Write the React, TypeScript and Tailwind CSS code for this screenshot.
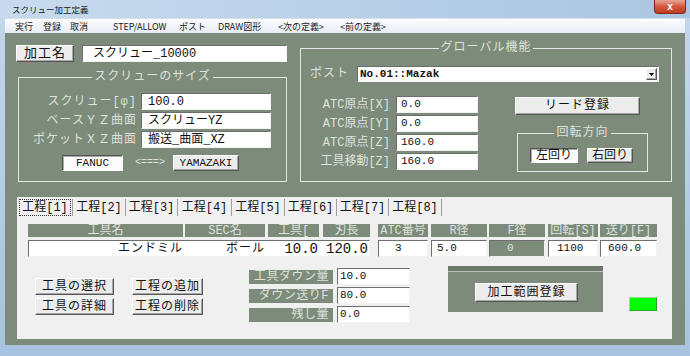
import React from "react";

const RAISED =
  "bg-[#ececec] border border-t-[#ffffff] border-l-[#ffffff] border-r-[#555555] border-b-[#555555] shadow-[inset_-1px_-1px_0_#a8a8a8]";
const PRESSED =
  "bg-[#fbfbfb] border border-t-[#555555] border-l-[#555555] border-r-[#ffffff] border-b-[#ffffff] shadow-[inset_1px_1px_0_#a8a8a8]";
const SUNKEN =
  "border border-t-[#6e6e6e] border-l-[#6e6e6e] border-r-[#f2f2f2] border-b-[#f2f2f2]";
const LABEL = "text-[12px] leading-none tracking-[1px] text-[#dde2dd] whitespace-nowrap";

function Btn({ className = "", children }: { className?: string; children: React.ReactNode }) {
  return (
    <div className={`flex items-center justify-center leading-none whitespace-nowrap text-[#111] ${RAISED} ${className}`}>
      {children}
    </div>
  );
}

function Input({ className = "", children }: { className?: string; children?: React.ReactNode }) {
  return (
    <div className={`flex items-center bg-white leading-none whitespace-nowrap text-[#111] ${SUNKEN} ${className}`}>
      {children}
    </div>
  );
}

function Group({ title, className = "", children }: { title: string; className?: string; children: React.ReactNode }) {
  return (
    <fieldset className={`border border-[#e3e7e3] ${className}`}>
      <legend className="mx-auto px-[2px] text-[12px] leading-[14px] tracking-[1px] text-[#dde2dd]">{title}</legend>
      {children}
    </fieldset>
  );
}

function Menu() {
  const items: [string, string][] = [
    ["実行", "w-[28px]"],
    ["登録", "w-[27px]"],
    ["取消", "w-[43px]"],
    ["STEP/ALLOW", "w-[66px]"],
    ["ポスト", "w-[39px]"],
    ["DRAW図形", "w-[60px]"],
    ["<次の定義>", "w-[62px]"],
    ["<前の定義>", "w-[70px]"],
  ];
  return (
    <div className="h-[15px] flex items-center pl-[10px] bg-gradient-to-b from-[#fbfcfe] to-[#e8ecf3] border-t border-[#d8dfe9] font-['Noto_Sans_CJK_JP','Liberation_Sans',sans-serif] text-[9px] leading-none text-[#222]">
      {items.map(([t, w]) => (
        <span key={t} className={`${w} whitespace-nowrap`}>
          {t}
        </span>
      ))}
    </div>
  );
}

function LeftCol() {
  const rows: [string, string][] = [
    ["スクリュー[φ]", "100.0"],
    ["ベースＹＺ曲面", "スクリューYZ"],
    ["ポケットＸＺ曲面", "搬送_曲面_XZ"],
  ];
  return (
    <div className="ml-[11px] mt-[12px] w-[271px] flex flex-col">
      <div className="flex h-[17px]">
        <Btn className="w-[58px] h-[17px] text-[13px] tracking-[1px]">加工名</Btn>
        <Input className="ml-[8px] w-[205px] h-[17px] pl-[10px] text-[12px]">スクリュー_10000</Input>
      </div>
      <Group title="スクリューのサイズ" className="mt-[8px] ml-[2px] w-[269px] h-[112px]">
        <div className="mt-[9px] flex flex-col gap-[2px] pr-[15px]">
          {rows.map(([l, v]) => (
            <div key={l} className="h-[17px] flex items-center justify-end">
              <span className={LABEL}>{l}</span>
              <Input className="ml-[4px] w-[130px] h-[17px] pl-[6px] text-[12px]">{v}</Input>
            </div>
          ))}
        </div>
        <div className="mt-[7px] flex items-center pl-[43px] h-[16px]">
          <div className={`w-[61px] h-[16px] flex items-center justify-center text-[11px] leading-none text-[#111] ${PRESSED}`}>
            FANUC
          </div>
          <span className="ml-[12px] text-[10px] leading-none text-[#dde2dd]">{"<===>"}</span>
          <Btn className="ml-[8px] w-[66px] h-[16px] text-[11px]">YAMAZAKI</Btn>
        </div>
      </Group>
    </div>
  );
}

function RightGroup() {
  const rows: [string, string][] = [
    ["ATC原点[X]", "0.0"],
    ["ATC原点[Y]", "0.0"],
    ["ATC原点[Z]", "160.0"],
    ["工具移動[Z]", "160.0"],
  ];
  return (
    <Group title="グローバル機能" className="ml-[13px] mt-[8px] w-[372px] h-[141px]">
      <div className="mt-[11px] h-[16px] flex items-center pl-[9px]">
        <span className={LABEL}>ポスト</span>
        <Input className="ml-[8px] w-[302px] h-[16px] justify-between">
          <span className="pl-[2px] text-[11px] font-bold">No.01::Mazak</span>
          <div className={`mr-[1px] w-[11px] h-[12px] flex items-center justify-center ${RAISED}`}>
            <svg width="5" height="3" viewBox="0 0 5 3">
              <path d="M0 0H5L2.5 3Z" fill="#000" />
            </svg>
          </div>
        </Input>
      </div>
      <div className="mt-[14px] flex items-start">
        <div className="flex flex-col gap-[2px]">
          {rows.map(([l, v]) => (
            <div key={l} className="h-[17px] flex items-center">
              <span className={`w-[89px] text-right text-[12px] leading-none text-[#dde2dd] whitespace-nowrap`}>{l}</span>
              <Input className="ml-[6px] w-[82px] h-[17px] pl-[4px] text-[11px]">{v}</Input>
            </div>
          ))}
        </div>
        <div className="ml-[37px] flex flex-col">
          <Btn className="mt-[1px] w-[125px] h-[18px] text-[12px] tracking-[1px]">リード登録</Btn>
          <Group title="回転方向" className="mt-[11px] ml-[2px] w-[131px] h-[46px]">
            <div className="mt-[8px] flex pl-[12px]">
              <div className={`w-[48px] h-[15px] flex items-center justify-center text-[12px] leading-none text-[#111] ${PRESSED}`}>
                左回り
              </div>
              <Btn className="ml-[9px] w-[46px] h-[15px] text-[12px]">右回り</Btn>
            </div>
          </Group>
        </div>
      </div>
    </Group>
  );
}

function TabPanel() {
  const tabs: [string, string][] = [
    ["工程[1]", "w-[55px]"],
    ["工程[2]", "w-[53px]"],
    ["工程[3]", "w-[52px]"],
    ["工程[4]", "w-[54px]"],
    ["工程[5]", "w-[53px]"],
    ["工程[6]", "w-[52px]"],
    ["工程[7]", "w-[52px]"],
    ["工程[8]", "w-[53px]"],
  ];
  const heads: [string, string][] = [
    ["工具名", "w-[155px]"],
    ["SEC名", "ml-[2px] w-[80px]"],
    ["工具[", "ml-[3px] w-[51px]"],
    ["刃長", "ml-[4px] w-[47px]"],
    ["ATC番号", "ml-[8px] w-[50px]"],
    ["R径", "ml-[3px] w-[56px]"],
    ["F径", "ml-[2px] w-[56px]"],
    ["回転[S]", "ml-[3px] w-[50px]"],
    ["送り[F]", "ml-[2px] w-[57px]"],
  ];
  return (
    <div className="ml-[12px] mt-[15px] w-[655px] h-[142px] bg-[#f0f0f0] flex flex-col">
      <div className="mt-[2px] h-[17px] flex pl-[1px]">
        {tabs.map(([t, w], i) => (
          <div key={t} className={`${w} h-[17px] flex items-center justify-center border-r border-[#a0a0a0]`}>
            {i === 0 ? (
              <span className="w-[52px] h-[17px] flex items-center justify-center border border-dotted border-[#333] text-[12px] leading-none text-[#111]">
                {t}
              </span>
            ) : (
              <span className="text-[12px] leading-none text-[#111]">{t}</span>
            )}
          </div>
        ))}
      </div>
      <div className="mt-[8px] h-[13px] flex pl-[11px]">
        {heads.map(([t, w]) => (
          <div key={t} className={`${w} h-[13px] bg-[#7d8b7a] flex items-center justify-center text-[12px] leading-none text-[#dde2dd] whitespace-nowrap overflow-hidden`}>
            {t}
          </div>
        ))}
      </div>
      <div className="mt-[3px] h-[17px] flex pl-[11px]">
        <Input className="w-[342px] h-[17px]">
          <span className="w-[154px] text-right text-[12px] tracking-[1px]">エンドミル</span>
          <span className="w-[82px] text-right text-[12px] tracking-[1px]">ボール</span>
          <span className="w-[53px] text-right text-[14px]">10.0</span>
          <span className="w-[50px] text-right text-[14px]">120.0</span>
        </Input>
        <Input className="ml-[8px] w-[50px] h-[17px] pl-[16px] text-[11px]">3</Input>
        <Input className="ml-[3px] w-[56px] h-[17px] pl-[5px] text-[11px]">5.0</Input>
        <div className={`ml-[2px] w-[56px] h-[17px] pl-[17px] flex items-center bg-[#7d8b7a] text-[11px] leading-none text-[#dde2dd] ${SUNKEN}`}>
          0
        </div>
        <Input className="ml-[3px] w-[50px] h-[17px] pl-[8px] text-[11px]">1100</Input>
        <Input className="ml-[2px] w-[57px] h-[17px] pl-[7px] text-[11px]">600.0</Input>
      </div>
      <div className="flex items-start">
        <div className="ml-[18px] mt-[21px] grid grid-cols-[79px_71px] gap-x-[18px] gap-y-[3px]">
          <Btn className="h-[17px] text-[12px] tracking-[1px]">工具の選択</Btn>
          <Btn className="h-[17px] text-[12px] tracking-[1px]">工程の追加</Btn>
          <Btn className="h-[17px] text-[12px] tracking-[1px]">工具の詳細</Btn>
          <Btn className="h-[17px] text-[12px] tracking-[1px]">工程の削除</Btn>
        </div>
        <div className="ml-[46px] mt-[11px] flex flex-col gap-[2px]">
          {[
            ["工具ダウン量", "10.0"],
            ["ダウン送りF", "80.0"],
            ["残し量", "0.0"],
          ].map(([l, v]) => (
            <div key={l} className="h-[17px] flex items-center">
              <div className="w-[84px] h-[14px] bg-[#7d8b7a] flex items-center justify-end pr-[4px] text-[12px] leading-none tracking-[0.5px] text-[#dde2dd] whitespace-nowrap">
                {l}
              </div>
              <Input className="ml-[4px] w-[73px] h-[17px] pl-[2px] text-[11px]">{v}</Input>
            </div>
          ))}
        </div>
        <div className="ml-[38px] mt-[9px] w-[155px] h-[46px] bg-[#7d8b7a] flex flex-col">
          <div className="h-[5px] bg-[#6c796a]" />
          <div className="h-[1px] bg-[#b9c2b9]" />
          <Btn className="ml-[27px] mt-[11px] w-[103px] h-[19px] text-[12px] tracking-[1px]">加工範囲登録</Btn>
        </div>
        <div className="ml-[26px] mt-[40px] w-[28px] h-[14px] bg-[#00ff00] border border-t-[#9ed89e] border-l-[#9ed89e] border-r-[#2fa52f] border-b-[#2fa52f]" />
      </div>
    </div>
  );
}

function Client() {
  return (
    <div className="h-[312px] bg-[#7d8b7a] flex flex-col">
      <div className="flex items-start">
        <LeftCol />
        <RightGroup />
      </div>
      <TabPanel />
    </div>
  );
}

export default function App() {
  return (
    <div className="w-[690px] h-[356px] flex flex-col overflow-hidden bg-gradient-to-b from-[#c3d7ec] to-[#a8c3df] font-['Liberation_Mono','Noto_Sans_CJK_JP',monospace] text-[#111]">
      <div className="h-[18px] flex items-start justify-between bg-gradient-to-r from-[#c8daee] via-[#b9d0e8] to-[#aac6e2]">
        <div className="pl-[12px] pt-[4px] text-[8.5px] leading-[10px] font-['Noto_Sans_CJK_JP',sans-serif] text-[#1a1a1a]">
          スクリュー加工定義
        </div>
        <div className="mr-[4px] w-[32px] h-[14px] rounded-b-[4px] border border-t-0 border-[#7d2a1e] bg-gradient-to-b from-[#e8a596] via-[#d0583f] to-[#c23a22] flex items-center justify-center text-white text-[10px] font-bold leading-none font-['Liberation_Sans',sans-serif]">
          x
        </div>
      </div>
      <div className="flex flex-col pl-[5px] pr-[5px]">
        <Menu />
        <Client />
      </div>
      <div className="h-[11px]" />
    </div>
  );
}
